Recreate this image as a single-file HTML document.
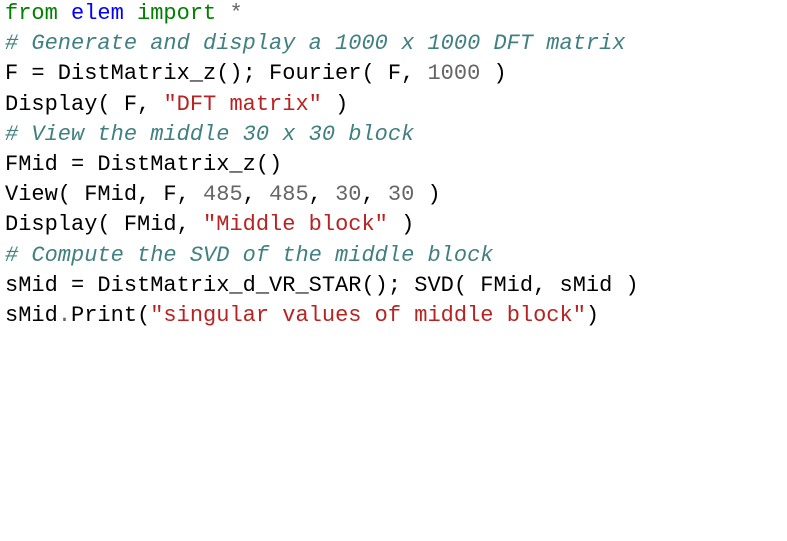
<html><head><style>
body{margin:0;background:#fff;}
pre{margin:0;position:absolute;left:5px;top:-1px;font-family:"Liberation Mono",monospace;font-size:22px;line-height:30.2px;color:#000;}
.k{color:#008000}.n{color:#0000ff}.c{color:#408080;font-style:italic}.s{color:#ba2121}.m{color:#666}.o{color:#666}
</style></head><body><pre><span class="k">from</span> <span class="n">elem</span> <span class="k">import</span> <span class="o">*</span>
<span class="c"># Generate and display a 1000 x 1000 DFT matrix</span>
F = DistMatrix_z(); Fourier( F, <span class="m">1000</span> )
Display( F, <span class="s">"DFT matrix"</span> )
<span class="c"># View the middle 30 x 30 block</span>
FMid = DistMatrix_z()
View( FMid, F, <span class="m">485</span>, <span class="m">485</span>, <span class="m">30</span>, <span class="m">30</span> )
Display( FMid, <span class="s">"Middle block"</span> )
<span class="c"># Compute the SVD of the middle block</span>
sMid = DistMatrix_d_VR_STAR(); SVD( FMid, sMid )
sMid<span class="o">.</span>Print(<span class="s">"singular values of middle block"</span>)
</pre></body></html>
